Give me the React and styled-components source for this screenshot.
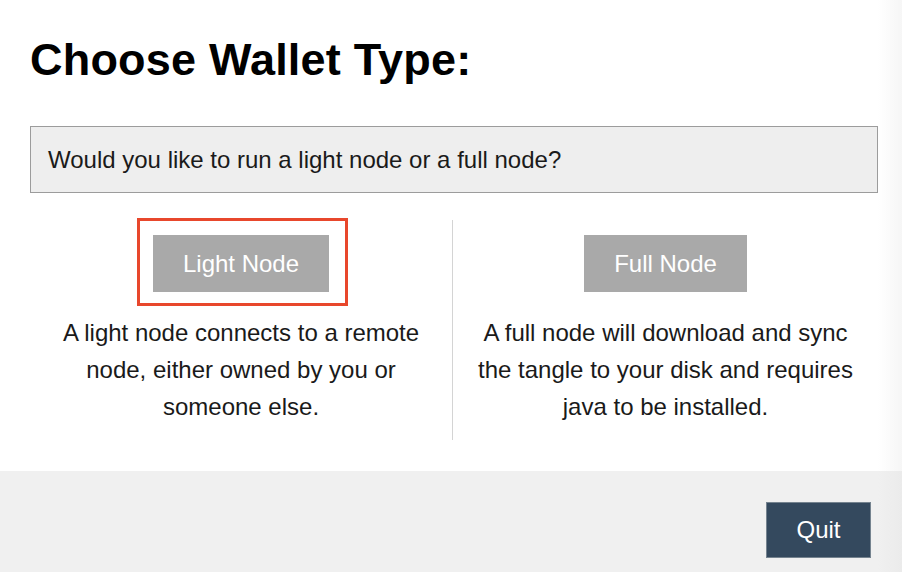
import React from 'react';
import styled, { createGlobalStyle } from 'styled-components';

const GlobalStyle = createGlobalStyle`
  html, body {
    margin: 0;
    padding: 0;
    background: #fff;
  }
  body {
    font-family: "Liberation Sans", Arial, Helvetica, sans-serif;
    color: #111;
  }
`;

const Page = styled.div`
  position: relative;
  width: 902px;
  height: 572px;
  display: flex;
  flex-direction: column;
  overflow: hidden;
  background: linear-gradient(to right, #fff 878px, #f6f6f6 902px);
`;

const Main = styled.div`
  flex: 1;
  padding: 0 24px 0 30px;
  display: flex;
  flex-direction: column;
`;

const Title = styled.h1`
  margin: 37px 0 0;
  font-size: 45px;
  line-height: 45px;
  font-weight: 700;
  letter-spacing: 0.2px;
  color: #000;
`;

const Question = styled.div`
  margin-top: 44px;
  height: 65px;
  display: flex;
  align-items: center;
  padding: 0 16px 0 17px;
  background: #eeeeee;
  border: 1px solid #9c9c9c;
  font-size: 24px;
  color: #1a1a1a;
`;

const Options = styled.div`
  margin-top: 27px;
  display: grid;
  grid-template-columns: 422px 1fr;
`;

const Option = styled.div`
  display: flex;
  flex-direction: column;
  align-items: center;
  padding: 15px 17px 15px;
  border-left: ${p => (p.$divided ? '1.5px solid #d4d4d4' : 'none')};
`;

const NodeButton = styled.button`
  position: relative;
  height: 57px;
  padding: 0 30px;
  border: none;
  background: #a9a9a9;
  color: #fff;
  font-family: inherit;
  font-size: 24px;
  cursor: pointer;

  ${p =>
    p.$highlighted &&
    `
    &::after {
      content: '';
      position: absolute;
      top: -17px;
      left: -16px;
      right: -19px;
      bottom: -14px;
      border: 3px solid #e8472c;
      pointer-events: none;
    }
  `}
`;

const Description = styled.p`
  margin: 22px 0 0;
  max-width: 390px;
  text-align: center;
  font-size: 24px;
  line-height: 37px;
  color: #1a1a1a;
`;

const Footer = styled.div`
  height: 101px;
  box-sizing: border-box;
  display: flex;
  justify-content: flex-end;
  align-items: flex-start;
  padding: 31px 31px 0 0;
  background: linear-gradient(to right, #f0f0f0 878px, #ebebeb 902px);
`;

const QuitButton = styled.button`
  width: 105px;
  height: 56px;
  background: #34495e;
  border: 1px solid #75838f;
  color: #fff;
  font-family: inherit;
  font-size: 24px;
  cursor: pointer;
`;

const options = [
  {
    label: 'Light Node',
    text: 'A light node connects to a remote node, either owned by you or someone else.',
    highlighted: true,
  },
  {
    label: 'Full Node',
    text: 'A full node will download and sync the tangle to your disk and requires java to be installed.',
  },
];

const App = () => {
  return (
    <Page>
      <GlobalStyle />
      <Main>
        <Title>Choose Wallet Type:</Title>
        <Question>Would you like to run a light node or a full node?</Question>
        <Options>
          {options.map((opt, i) => (
            <Option key={opt.label} $divided={i > 0}>
              <NodeButton $highlighted={opt.highlighted}>{opt.label}</NodeButton>
              <Description>{opt.text}</Description>
            </Option>
          ))}
        </Options>
      </Main>
      <Footer>
        <QuitButton>Quit</QuitButton>
      </Footer>
    </Page>
  );
};

export default App;
